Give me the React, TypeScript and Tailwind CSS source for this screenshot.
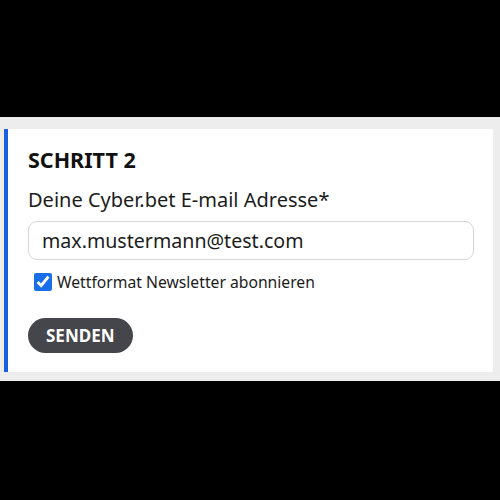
export default function App() {
  return (
    <div className="h-[500px] w-[500px] bg-black pt-[117px] font-['Noto_Sans',sans-serif]">
      <div className="bg-[#ededed] pb-[9px] pl-[4px] pr-[7px] pt-[12px]">
        <section className="h-[243px] border-l-4 border-[#1a5fe0] bg-white pl-[20px] pr-[19px] pt-[16px]">
          <h2 className="text-[21.5px] font-bold leading-[30px] text-[#111]">SCHRITT 2</h2>
          <label className="mt-[12px] block text-[20px] leading-[26px] text-[#1c1c1c]">
            Deine Cyber.bet E-mail Adresse*
          </label>
          <input
            type="email"
            defaultValue="max.mustermann@test.com"
            className="mt-[8px] block h-[39px] w-full rounded-[9px] border border-[#d6d6d6] px-[13px] text-[19.6px] text-[#1c1c1c] outline-none"
          />
          <label className="mt-[11px] flex items-center gap-[5px] pl-[6px] text-[15.7px] leading-[22px] text-[#1c1c1c]">
            <input type="checkbox" defaultChecked className="m-0 h-[18px] w-[18px] accent-[#1a6ee8]" />
            Wettformat Newsletter abonnieren
          </label>
          <button className="mt-[25px] h-[35px] rounded-full bg-[#45464c] px-[18px] text-[17px] font-bold text-white">
            SENDEN
          </button>
        </section>
      </div>
    </div>
  );
}
